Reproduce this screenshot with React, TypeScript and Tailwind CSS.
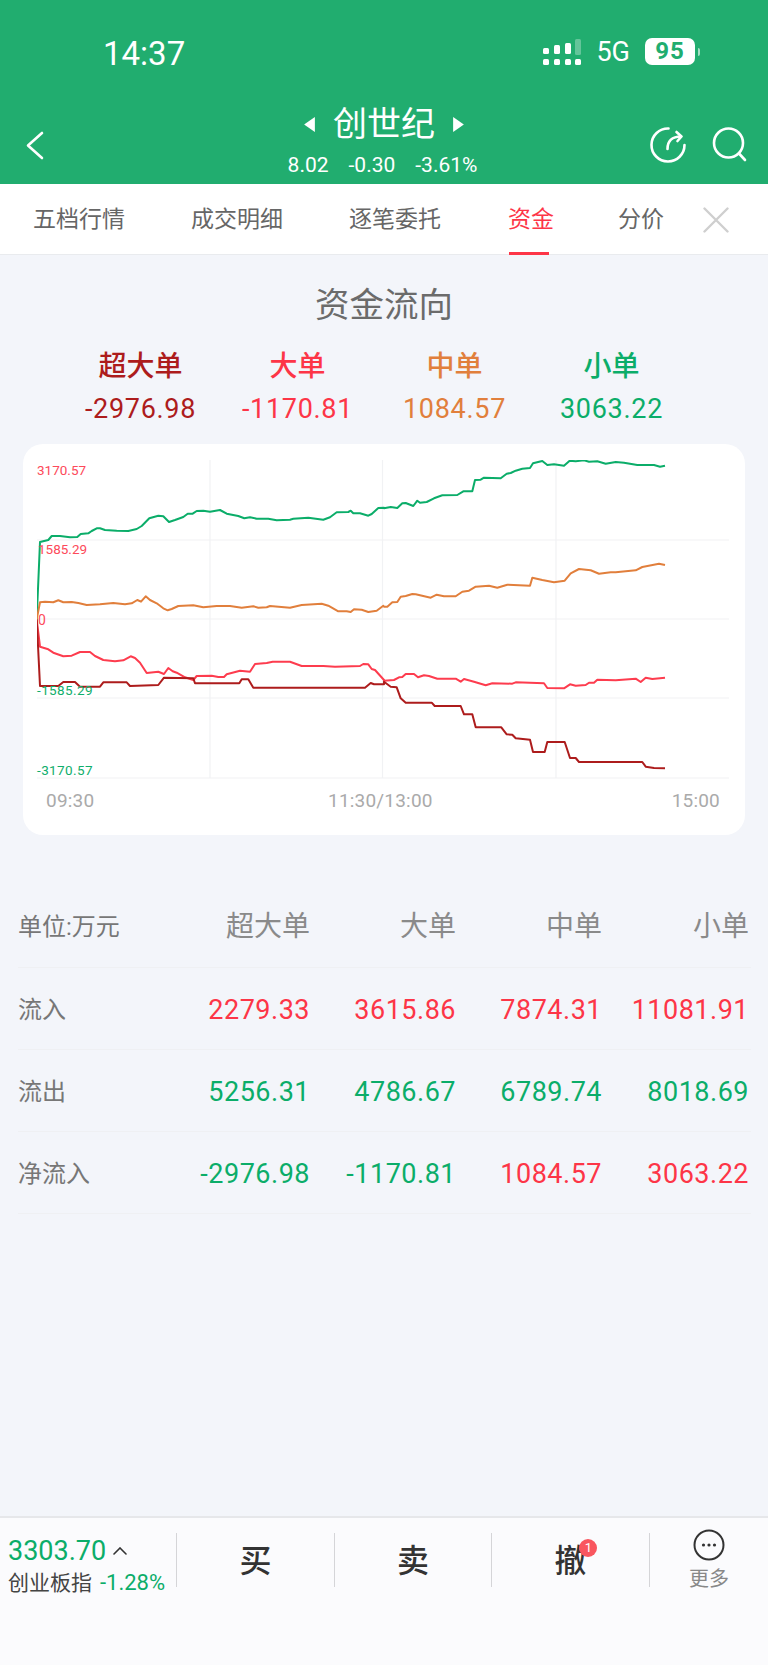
import React from "react";

type P = [number, number];
const L = (pts: P[]) => pts.map(([x, y]) => [x / 3, 430 + y / 3] as P);
const R = (pts: P[]) => pts.map(([x, y]) => [384 + x / 3, 430 + y / 3] as P);
const toStr = (pts: P[]) => pts.map(([x, y]) => `${x.toFixed(1)},${y.toFixed(1)}`).join(" ");

const green = [...L([[110,568],[120,336],[145,330],[155,318],[180,318],[210,322],[232,321],[242,312],[265,310],[275,303],[290,295],[300,295],[315,300],[350,302],[385,303],[410,297],[425,288],[448,265],[475,257],[490,259],[507,276],[525,270],[550,261],[563,251],[578,251],[590,243],[610,242],[630,245],[660,240],[680,251],[715,258],[733,265],[750,262],[770,266],[805,266],[830,271],[870,269],[880,266],[925,263],[970,269],[990,262],[1010,247],[1045,246],[1052,242],[1060,250],[1080,250],[1105,257],[1115,252],[1135,234],[1152,233]]),
  ...R([[0,235],[20,231],[40,234],[55,220],[65,219],[88,228],[100,212],[108,218],[128,216],[150,205],[175,196],[220,195],[238,184],[265,184],[273,150],[290,149],[300,143],[350,145],[368,131],[380,129],[395,122],[415,116],[438,114],[447,100],[475,93],[490,105],[510,103],[540,107],[557,92],[575,94],[600,91],[615,95],[640,94],[665,101],[695,96],[720,98],[760,105],[780,105],[810,105],[828,110],[843,107]])];
const orange = [...L([[110,568],[120,517],[135,515],[160,517],[175,511],[190,517],[215,516],[235,519],[260,525],[300,523],[340,519],[375,523],[395,520],[412,510],[423,515],[437,499],[450,510],[470,520],[490,535],[503,541],[515,537],[535,528],[580,526],[610,532],[650,528],[690,528],[725,533],[760,529],[775,533],[800,532],[810,528],[870,533],[905,525],[965,521],[985,527],[1015,544],[1040,544],[1052,546],[1062,538],[1085,539],[1105,546],[1130,542],[1150,527]]),
  ...R([[0,530],[10,530],[25,517],[40,516],[50,500],[65,498],[85,492],[95,493],[140,503],[158,494],[180,499],[215,499],[235,485],[255,482],[275,470],[315,467],[340,473],[370,464],[438,467],[445,443],[475,450],[510,457],[542,452],[560,430],[585,417],[620,421],[645,431],[680,427],[695,427],[755,421],[775,411],[825,401],[843,405]])];
const red = [...L([[110,568],[120,650],[145,658],[160,668],[190,679],[215,677],[240,666],[270,666],[285,678],[310,690],[345,694],[370,691],[392,679],[405,684],[420,698],[440,729],[475,725],[492,732],[505,714],[518,724],[530,728],[555,742],[580,750],[590,738],[635,737],[655,741],[672,741],[680,733],[720,722],[750,725],[765,702],[800,699],[818,695],[870,695],[905,708],[970,708],[1005,710],[1080,708],[1090,702],[1105,703],[1115,717],[1125,720],[1152,750]]),
  ...R([[0,752],[30,750],[45,742],[55,741],[65,732],[90,732],[102,742],[120,736],[135,738],[160,746],[215,746],[230,755],[240,747],[270,755],[305,766],[325,760],[385,761],[395,757],[480,760],[490,774],[540,775],[558,763],[575,767],[605,765],[615,758],[630,758],[640,749],[695,751],[755,746],[770,756],[785,743],[805,747],[843,743]])];
const dark = [...L([[110,568],[120,768],[175,768],[190,756],[225,756],[240,770],[300,770],[310,757],[380,757],[390,768],[475,765],[492,743],[580,745],[585,760],[718,760],[725,748],[745,748],[760,773],[1095,773],[1112,759],[1122,763],[1152,763]]),
  ...R([[0,755],[20,770],[38,772],[50,805],[65,818],[143,818],[152,828],[230,828],[240,853],[265,853],[275,892],[352,892],[368,913],[385,914],[395,925],[438,929],[447,966],[482,966],[490,936],[542,936],[558,984],[575,984],[585,996],[775,996],[785,1010],[810,1014],[843,1015]])];

function Signal() {
  return (
    <svg width="38" height="26" viewBox="0 0 38 26" fill="#fff">
      <rect x="0" y="9" width="6" height="6" rx="1.5" />
      <rect x="11" y="6" width="6" height="9" rx="1.5" />
      <rect x="22" y="4" width="6" height="11" rx="1.5" />
      <rect x="32" y="0" width="6" height="16" rx="1.5" opacity="0.3" />
      <rect x="0" y="20" width="6" height="6" rx="1.5" />
      <rect x="11" y="20" width="6" height="6" rx="1.5" />
      <rect x="22" y="20" width="6" height="6" rx="1.5" />
      <rect x="32" y="20" width="6" height="6" rx="1.5" />
    </svg>
  );
}

function Chart() {
  return (
    <div className="relative h-[319px] w-[692px]">
      <svg width="692" height="319" viewBox="37 460 692 319" fill="none">
        {[540, 619, 698, 778].map((y) => (
          <line key={y} x1="37" x2="729" y1={y} y2={y} stroke="#f1f2f4" strokeWidth="1.2" />
        ))}
        {[210, 382.5, 556].map((x) => (
          <line key={x} x1={x} x2={x} y1="460" y2="778" stroke="#f1f2f4" strokeWidth="1.2" />
        ))}
        <polyline points={toStr(green)} stroke="#0bad69" strokeWidth="2" strokeLinejoin="round" />
        <polyline points={toStr(orange)} stroke="#e17f3c" strokeWidth="2" strokeLinejoin="round" />
        <polyline points={toStr(red)} stroke="#fd3c4e" strokeWidth="2" strokeLinejoin="round" />
        <polyline points={toStr(dark)} stroke="#ad1c1c" strokeWidth="2" strokeLinejoin="round" />
      </svg>
      <span className="absolute left-0 top-[2px] text-[13.5px] leading-[16px] text-[#fd4a5a]">3170.57</span>
      <span className="absolute left-[1px] top-[81px] text-[13.5px] leading-[16px] text-[#fd4a5a]">1585.29</span>
      <span className="absolute left-[1px] top-[152px] text-[14px] leading-[16px] text-[#fd4a5a]">0</span>
      <span className="absolute left-0 top-[222px] text-[13.5px] leading-[16px] tracking-[0.4px] text-[#0fae6b]">-1585.29</span>
      <span className="absolute left-0 top-[302px] text-[13.5px] leading-[16px] tracking-[0.4px] text-[#0fae6b]">-3170.57</span>
    </div>
  );
}

const summary = [
  { t: "超大单", v: "-2976.98", c: "text-[#ad1c1c]" },
  { t: "大单", v: "-1170.81", c: "text-[#fd3547]" },
  { t: "中单", v: "1084.57", c: "text-[#e17f3c]" },
  { t: "小单", v: "3063.22", c: "text-[#0bad69]" },
];

const R_ = "text-[#fd3547]";
const G_ = "text-[#0bad69]";
const rows = [
  { l: "流入", v: [["2279.33", R_], ["3615.86", R_], ["7874.31", R_], ["11081.91", R_]] },
  { l: "流出", v: [["5256.31", G_], ["4786.67", G_], ["6789.74", G_], ["8018.69", G_]] },
  { l: "净流入", v: [["-2976.98", G_], ["-1170.81", G_], ["1084.57", R_], ["3063.22", R_]] },
];

const colGrid = "grid grid-cols-[140px_152px_146px_146px_147px] items-center";

export default function App() {
  return (
    <div className="flex h-[1665px] w-[768px] flex-col overflow-hidden bg-[#f3f5fa] [font-family:Roboto,'Noto_Sans_CJK_SC',sans-serif]">
      {/* header */}
      <header className="h-[184px] shrink-0 bg-[#21ad6f] text-white">
        <div className="flex h-[101px] items-start justify-between pl-[103px] pr-[68px] pt-[35px]">
          <span className="text-[33px] leading-[38px]">14:37</span>
          <div className="flex items-center pt-[3px]">
            <Signal />
            <span className="ml-[15px] text-[27px] leading-[26px]">5G</span>
            <span className="ml-[15px] flex h-[27px] w-[50px] items-center justify-center rounded-[7px] bg-white text-[24px] font-bold leading-[27px] tracking-[1px] text-[#21ad6f]">95</span>
            <span className="ml-[3px] h-[8px] w-[2px] rounded-r-full bg-white/60" />
          </div>
        </div>
        <div className="grid h-[83px] grid-cols-[1fr_auto_1fr] items-start">
          <div className="pl-[26px] pt-[30px]">
            <svg width="18" height="29" viewBox="0 0 18 29" fill="none" stroke="#fff" strokeWidth="2.6" strokeLinecap="round" strokeLinejoin="round">
              <path d="M16 2 L2 14.5 L16 27" />
            </svg>
          </div>
          <div className="flex flex-col items-center">
            <div className="flex items-center">
              <svg width="13" height="15" viewBox="0 0 12 14" fill="#fff"><path d="M11 0 L11 14 L1 7 Z" /></svg>
              <span className="mx-[17px] text-[34px] leading-[46px]">创世纪</span>
              <svg width="13" height="15" viewBox="0 0 12 14" fill="#fff"><path d="M1 0 L1 14 L11 7 Z" /></svg>
            </div>
            <div className="mt-[6px] flex gap-[20px] pr-[3px] text-[21px] leading-[24px]">
              <span>8.02</span>
              <span>-0.30</span>
              <span>-3.61%</span>
            </div>
          </div>
          <div className="flex justify-end gap-[25px] pr-[20px] pt-[25px]">
            <svg width="38" height="38" viewBox="0 0 38 38" fill="none" stroke="#fff" strokeWidth="2.6" strokeLinecap="round" strokeLinejoin="round">
              <path d="M35.5 19 A16.5 16.5 0 1 1 19.5 2.5" />
              <path d="M18.5 23 C18.5 15 23 10.5 32 10.5" />
              <path d="M27.5 6 L32.5 10.5 L28.5 15" />
            </svg>
            <svg width="36" height="38" viewBox="0 0 36 38" fill="none" stroke="#fff" strokeWidth="2.6" strokeLinecap="round">
              <circle cx="16.5" cy="17" r="14.5" />
              <path d="M27 27.5 L33 34" />
            </svg>
          </div>
        </div>
      </header>

      {/* tabs */}
      <nav className="relative flex h-[71px] shrink-0 items-center border-b border-[#e9ebee] bg-white pt-[2px] text-[23px] text-[#666]">
        <span className="ml-[33px] w-[158px]">五档行情</span>
        <span className="w-[158px]">成交明细</span>
        <span className="w-[159px]">逐笔委托</span>
        <span className="w-[110px] text-[#fd3547]">资金</span>
        <span className="w-[85px]">分价</span>
        <svg width="26" height="26" viewBox="0 0 26 26" fill="none" stroke="#cfcfcf" strokeWidth="2.4" strokeLinecap="round">
          <path d="M1.5 1.5 L24.5 24.5 M24.5 1.5 L1.5 24.5" />
        </svg>
        <span className="absolute bottom-[-1px] left-[509px] h-[3px] w-[40px] bg-[#fd3547]" />
      </nav>

      {/* summary */}
      <h2 className="mt-[28px] text-center text-[34.5px] leading-[44px] text-[#6b6b6b]">资金流向</h2>
      <div className="ml-[62px] mt-[21px] grid grid-cols-[repeat(4,157px)] text-center">
        {summary.map((s) => (
          <div key={s.t} className={s.c}>
            <div className="text-[28px] font-medium leading-[38px]">{s.t}</div>
            <div className="mt-[5px] text-[27px] leading-[36px] tracking-[0.7px]">{s.v}</div>
          </div>
        ))}
      </div>

      {/* chart card */}
      <section className="ml-[23px] mt-[17px] h-[391px] w-[722px] shrink-0 rounded-[20px] bg-white pl-[14px] pt-[16px]">
        <Chart />
        <div className="relative mt-[8px] flex justify-between pl-[9px] pr-[25px] text-[19px] leading-[28px] tracking-[0.2px] text-[#aaaaaa]">
          <span>09:30</span>
          <span className="absolute left-[291px]">11:30/13:00</span>
          <span>15:00</span>
        </div>
      </section>

      {/* table */}
      <div className="ml-[18px] mt-[51px] w-[733px]">
        <div className={`${colGrid} h-[82px] border-b border-[#eff0f3] pt-[1px] text-right text-[28px] text-[#8a8a8a]`}>
          <span className="text-left text-[24px] whitespace-nowrap text-[#777]">单位:万元</span>
          <span>超大单</span>
          <span>大单</span>
          <span>中单</span>
          <span>小单</span>
        </div>
        {rows.map((r) => (
          <div key={r.l} className={`${colGrid} h-[82px] border-b border-[#eff0f3] pt-[3px] text-right text-[27px] tracking-[0.5px]`}>
            <span className="text-left text-[24px] tracking-normal text-[#777]">{r.l}</span>
            {r.v.map(([v, c], i) => (
              <span key={i} className={c}>{v}</span>
            ))}
          </div>
        ))}
      </div>

      {/* bottom bar */}
      <footer className="mt-auto flex h-[149px] shrink-0 items-start border-t-2 border-[#e6e7ea] bg-[#fbfbfd] pt-[15px]">
        <div className="w-[176px] pl-[8px] pt-[3px]">
          <div className="flex h-[30px] items-center text-[27px] leading-[30px] text-[#0bad69]">
            3303.70
            <svg className="ml-[7px]" width="14" height="8" viewBox="0 0 14 8" fill="none" stroke="#333" strokeWidth="1.6" strokeLinecap="round"><path d="M1 7 L7 1 L13 7" /></svg>
          </div>
          <div className="mt-[2px] flex items-center whitespace-nowrap text-[21px] leading-[30px] text-[#444]">
            创业板指
            <span className="ml-[8px] text-[22px] text-[#0bad69]">-1.28%</span>
          </div>
        </div>
        <div className="flex h-[54px] w-[158px] items-center justify-center border-l border-[#d5d5d8] pt-[1px] text-[32px] font-medium text-[#333]">买</div>
        <div className="flex h-[54px] w-[157px] items-center justify-center border-l border-[#d5d5d8] pt-[1px] text-[32px] font-medium text-[#333]">卖</div>
        <div className="flex h-[54px] w-[158px] items-center justify-center border-l border-[#d5d5d8] pt-[1px] text-[32px] font-medium text-[#333]">
          <span className="relative">
            撤
            <span className="absolute left-[25px] top-[2px] flex h-[18px] w-[18px] items-center justify-center rounded-full bg-[#f9565f] text-[13px] font-normal leading-none text-white">1</span>
          </span>
        </div>
        <div className="flex h-[54px] w-[119px] justify-center border-l border-[#d5d5d8]">
          <div className="-mt-[4px] flex flex-col items-center">
            <svg className="shrink-0" width="32" height="32" viewBox="0 0 32 32" fill="none">
              <circle cx="16" cy="16" r="14.5" stroke="#333" strokeWidth="2" />
              <circle cx="10.5" cy="16" r="1.6" fill="#333" />
              <circle cx="16" cy="16" r="1.6" fill="#333" />
              <circle cx="21.5" cy="16" r="1.6" fill="#333" />
            </svg>
            <span className="mt-[6px] shrink-0 whitespace-nowrap text-[20px] leading-[24px] text-[#888]">更多</span>
          </div>
        </div>
      </footer>
    </div>
  );
}
